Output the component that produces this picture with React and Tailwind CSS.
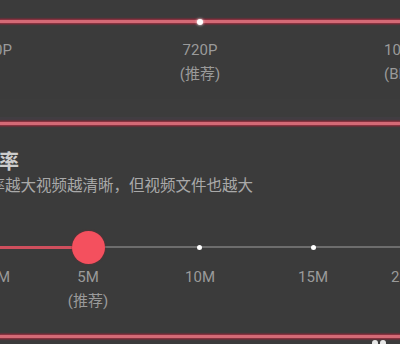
import React from "react";

const font = { fontFamily: "Roboto, 'Noto Sans CJK SC', 'Noto Sans', sans-serif" };

function RedLine() {
  return (
    <div className="h-[7px] w-full flex flex-col justify-center bg-[#4a3036]">
      <div className="h-[3px] w-full bg-[#d46a76] shadow-[0_0_2px_1px_#9c3645]" />
    </div>
  );
}

export default function App() {
  return (
    <div
      className="w-[400px] h-[344px] bg-[#3b3b3b] overflow-hidden flex flex-col relative"
      style={font}
    >
      {/* top slider line */}
      <div className="mt-[18px] relative">
        <RedLine />
        <div className="absolute left-[197px] top-[1px] w-[6px] h-[6px] rounded-full bg-white shadow-[0_0_3px_#fff]" />
      </div>

      {/* top labels */}
      <div className="relative h-[61px] text-[15px] leading-[24px] text-[#9a9a9a] mt-[13px]">
        <div className="absolute right-[388px] top-0 text-right">480P</div>
        <div className="absolute left-[200px] top-0 -translate-x-1/2 flex flex-col items-center">
          <span>720P</span>
          <span>(推荐)</span>
        </div>
        <div className="absolute left-[384px] top-0 flex flex-col">
          <span>1080P</span>
          <span>(BD)</span>
        </div>
      </div>

      <div className="h-[18px] bg-[#3c3c3c]" />
      <div className="h-[3px] bg-[#413d42]" />
      <RedLine />

      {/* bitrate section */}
      <div className="mt-[22px] flex flex-col">
        <div className="ml-[-21px] text-[20px] leading-[26px] font-bold text-[#cdcdcd]">码率</div>
        <div className="ml-[-26px] mt-[1px] text-[15.5px] leading-[20px] text-[#a9a9a9] whitespace-nowrap">
          码率越大视频越清晰，但视频文件也越大
        </div>
      </div>

      {/* slider */}
      <div className="relative mt-[34px] h-[34px]">
        <div className="absolute left-0 top-[16px] h-[3px] w-[88px] bg-[#cf4f5d]" />
        <div className="absolute left-[88px] right-0 top-[16px] h-[2px] bg-[#6d6d6d]" />
        <div className="absolute left-[197px] top-[15px] w-[5px] h-[5px] rounded-full bg-white" />
        <div className="absolute left-[311px] top-[15px] w-[5px] h-[5px] rounded-full bg-white" />
        <div className="absolute left-[72px] top-[1px] w-[33px] h-[33px] rounded-full bg-[#f4505e] shadow-[0_0_2px_#7a2a33]" />
      </div>

      {/* slider labels */}
      <div className="relative h-[50px] mt-[1px] text-[15px] leading-[24px] text-[#9a9a9a]">
        <div className="absolute right-[390px] top-0">1M</div>
        <div className="absolute left-[88px] top-0 -translate-x-1/2 flex flex-col items-center">
          <span>5M</span>
          <span>(推荐)</span>
        </div>
        <div className="absolute left-[200px] top-0 -translate-x-1/2">10M</div>
        <div className="absolute left-[313px] top-0 -translate-x-1/2">15M</div>
        <div className="absolute left-[391px] top-0">20M</div>
      </div>

      <div className="mt-[18px]">
        <RedLine />
      </div>
      <div className="absolute left-[372px] top-[340px] w-[6px] h-[6px] rounded-full bg-[#e8e8e8]" />
      <div className="absolute left-[380px] top-[340px] w-[6px] h-[6px] rounded-full bg-[#e8e8e8]" />
    </div>
  );
}
